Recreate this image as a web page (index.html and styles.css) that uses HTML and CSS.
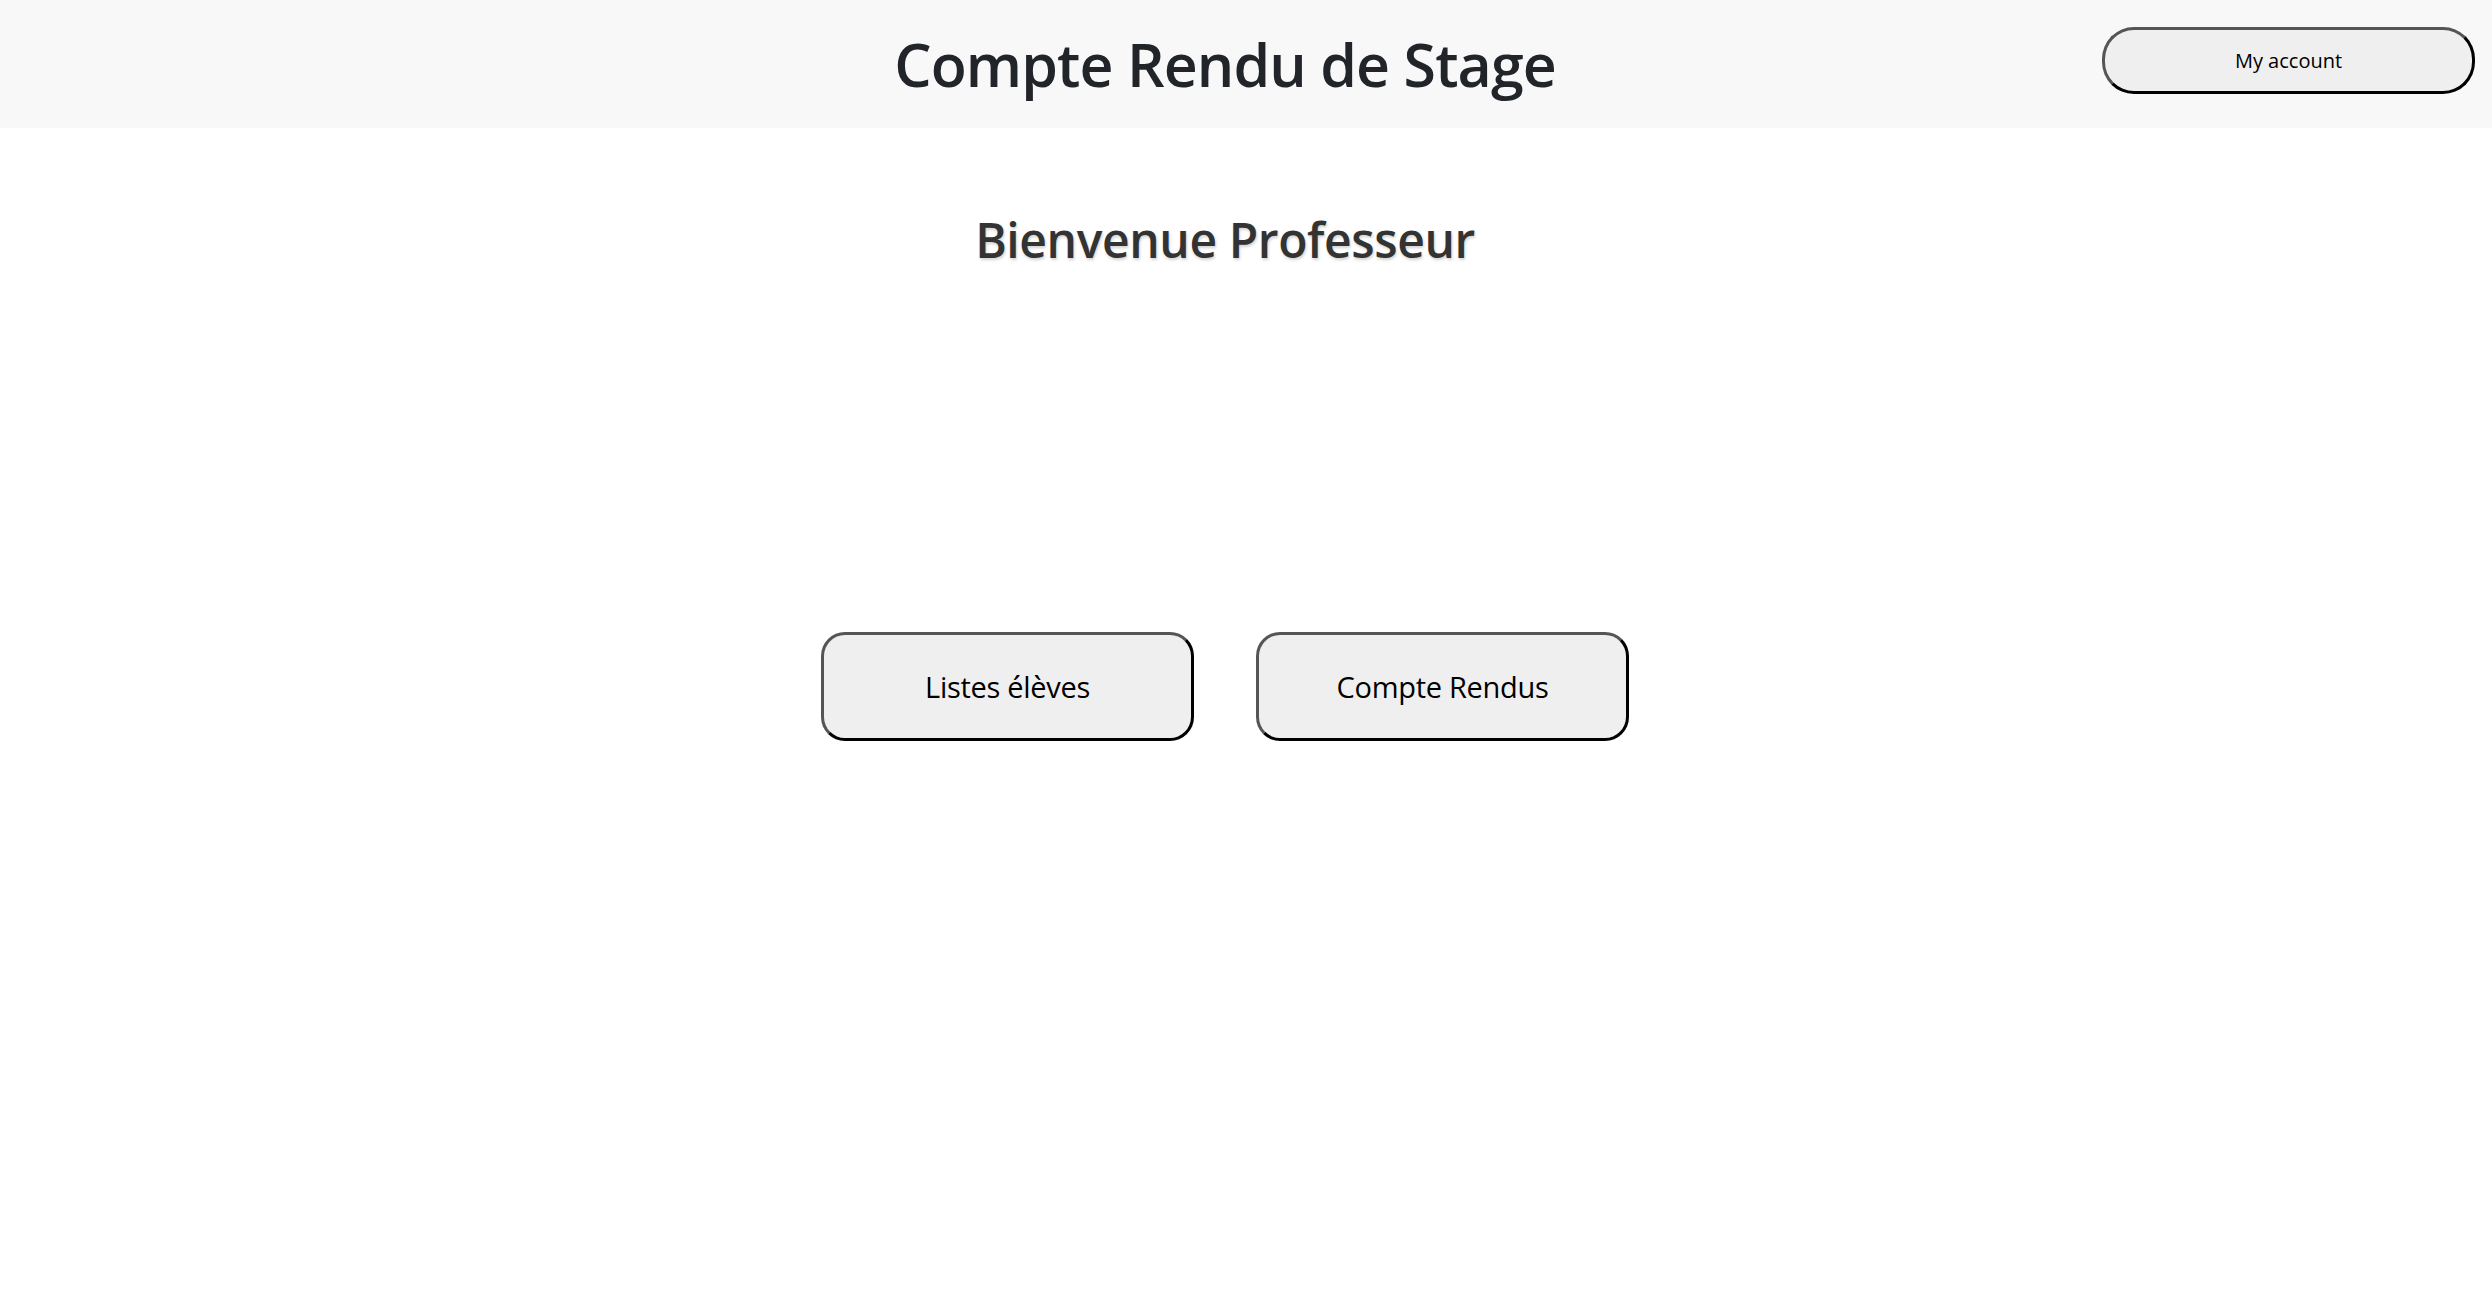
FILE: index.html
```html
<!DOCTYPE html>
<html lang="fr">
<head>
<meta charset="utf-8">
<title>Compte Rendu de Stage</title>
<link rel="stylesheet" href="styles.css">
</head>
<body>
<header class="topbar">
  <h1 class="site-title">Compte Rendu de Stage</h1>
  <button class="account-btn" type="button">My account</button>
</header>
<main class="content">
  <h2 class="welcome">Bienvenue Professeur</h2>
  <div class="actions">
    <button class="action-btn" type="button">Listes élèves</button>
    <button class="action-btn" type="button">Compte Rendus</button>
  </div>
</main>
</body>
</html>
```

FILE: styles.css
```css
* { box-sizing: border-box; }
html, body { margin: 0; padding: 0; }
body {
  font-family: "Open Sans", "Noto Sans", "Liberation Sans", sans-serif;
  background: #ffffff;
  color: #212529;
}
.topbar {
  position: relative;
  height: 128px;
  background: #f8f8f8;
  display: flex;
  align-items: center;
  justify-content: center;
  padding-right: 42px;
}
.site-title {
  margin: 0;
  font-size: 59px;
  font-weight: 600;
  line-height: 1.2;
  color: #212529;
  letter-spacing: -0.9px;
}
.account-btn {
  position: absolute;
  top: 27px;
  right: 17px;
  width: 373px;
  height: 67px;
  border: 3px solid;
  border-color: #555 #000 #000 #555;
  border-radius: 32px;
  background: #efefef;
  font-family: inherit;
  font-size: 20px;
  color: #000;
}
.content {
  display: flex;
  flex-direction: column;
  align-items: center;
  padding-right: 42px;
}
.welcome {
  margin: 83px 0 0;
  font-size: 48px;
  font-weight: 600;
  line-height: 1.2;
  color: #333;
  text-shadow: 1px 2px 3px rgba(0,0,0,0.18);
  letter-spacing: -0.4px;
}
.actions {
  display: flex;
  gap: 62px;
  margin-top: 363px;
}
.action-btn {
  width: 373px;
  height: 109px;
  border: 3px solid;
  border-color: #555 #000 #000 #555;
  border-radius: 24px;
  background: #efefef;
  font-family: inherit;
  font-size: 29px;
  color: #000;
  letter-spacing: -0.3px;
}
```
